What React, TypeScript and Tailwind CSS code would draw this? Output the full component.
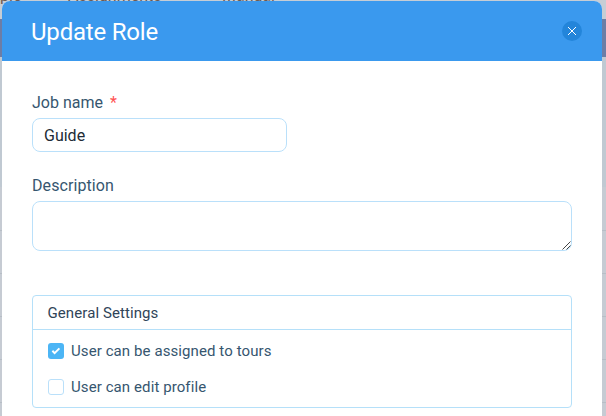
import React from "react";

const rowLine = "h-[43px] border-t border-[#b7bec6]";

function Backdrop() {
  return (
    <div className="absolute inset-0 overflow-hidden bg-[#c6cbd3]">
      <div className="relative h-[19px] bg-[#c6cdd5] text-[16px] leading-[18px] text-[#6d5a50]">
        <span className="absolute top-[-13px] left-0">ple</span>
        <span className="absolute top-[-13px] left-[68px]">Assignments</span>
        <span className="absolute top-[-13px] left-[222px]">Manual</span>
      </div>
      <div className="h-[38px] bg-[#6c7da6]" />
      <div className="h-[130px] bg-[#c0c9d2]" />
      <div className="h-[43px]" />
      <div className={rowLine} />
      <div className={rowLine} />
      <div className={rowLine} />
      <div className={rowLine} />
      <div className={rowLine} />
    </div>
  );
}

export default function App() {
  return (
    <div className="relative h-[416px] w-[606px] overflow-hidden font-['Roboto',sans-serif]">
      <Backdrop />
      <main className="relative mt-px ml-[2px] h-[415px] w-[600px] overflow-hidden rounded-t-[8px] bg-white text-[#36566f]">
        <header className="flex h-[60px] items-center justify-between bg-[#3a99ee] pr-5 pl-[29px]">
          <h1 className="pt-0.5 text-[24px] leading-[30px] tracking-[-0.2px] text-white">Update Role</h1>
          <button aria-label="Close" className="flex size-5 items-center justify-center rounded-full bg-[#2385da]">
            <svg width="8" height="8" viewBox="0 0 8 8" stroke="white" strokeWidth="1">
              <path d="M0 0 8 8M8 0 0 8" />
            </svg>
          </button>
        </header>
        <div className="px-[30px] pt-[31px]">
          <label className="block h-[26px] text-[16px] leading-[22px]">
            Job name <span className="ml-[3px] text-[#ff5252]">*</span>
          </label>
          <input
            defaultValue="Guide"
            className="block h-[34px] w-[255px] rounded-[8px] border border-[#bae0fa] px-[11px] text-[16px] text-[#212b36] outline-none"
          />
          <label className="mt-[23px] block h-[26px] text-[16px] leading-[22px] tracking-[0.08px]">Description</label>
          <div className="relative">
            <textarea className="block h-[50px] w-[540px] resize-none rounded-[8px] border border-[#bae0fa] outline-none" />
            <svg className="absolute right-[1px] bottom-[1px]" width="9" height="9" viewBox="0 0 9 9" stroke="#444" strokeWidth="1">
              <path d="M0.5 8.5 8.5 0.5M4.5 8.5 8.5 4.5" />
            </svg>
          </div>
          <section className="mt-11 h-[113px] rounded-[4px] border border-[#b5e0f9] text-[15px] tracking-[0.09px]">
            <h2 className="h-[34px] border-b border-[#b5e0f9] pl-[14.5px] leading-[34px] text-[#304458]">General Settings</h2>
            <div className="flex flex-col gap-3 pt-[9px] pl-[15px]">
              <label className="flex h-6 items-center gap-[7px]">
                <span className="flex size-4 items-center justify-center rounded-[3px] bg-[#4cb5f5]">
                  <svg width="10" height="8" viewBox="0 0 10 8" fill="none" stroke="white" strokeWidth="2">
                    <path d="m1.4 3.8 2.2 2.3 4.8-4.7" />
                  </svg>
                </span>
                User can be assigned to tours
              </label>
              <label className="flex h-6 items-center gap-[7px]">
                <span className="size-4 rounded-[3px] border border-[#bae0fa]" />
                User can edit profile
              </label>
            </div>
          </section>
        </div>
      </main>
    </div>
  );
}
